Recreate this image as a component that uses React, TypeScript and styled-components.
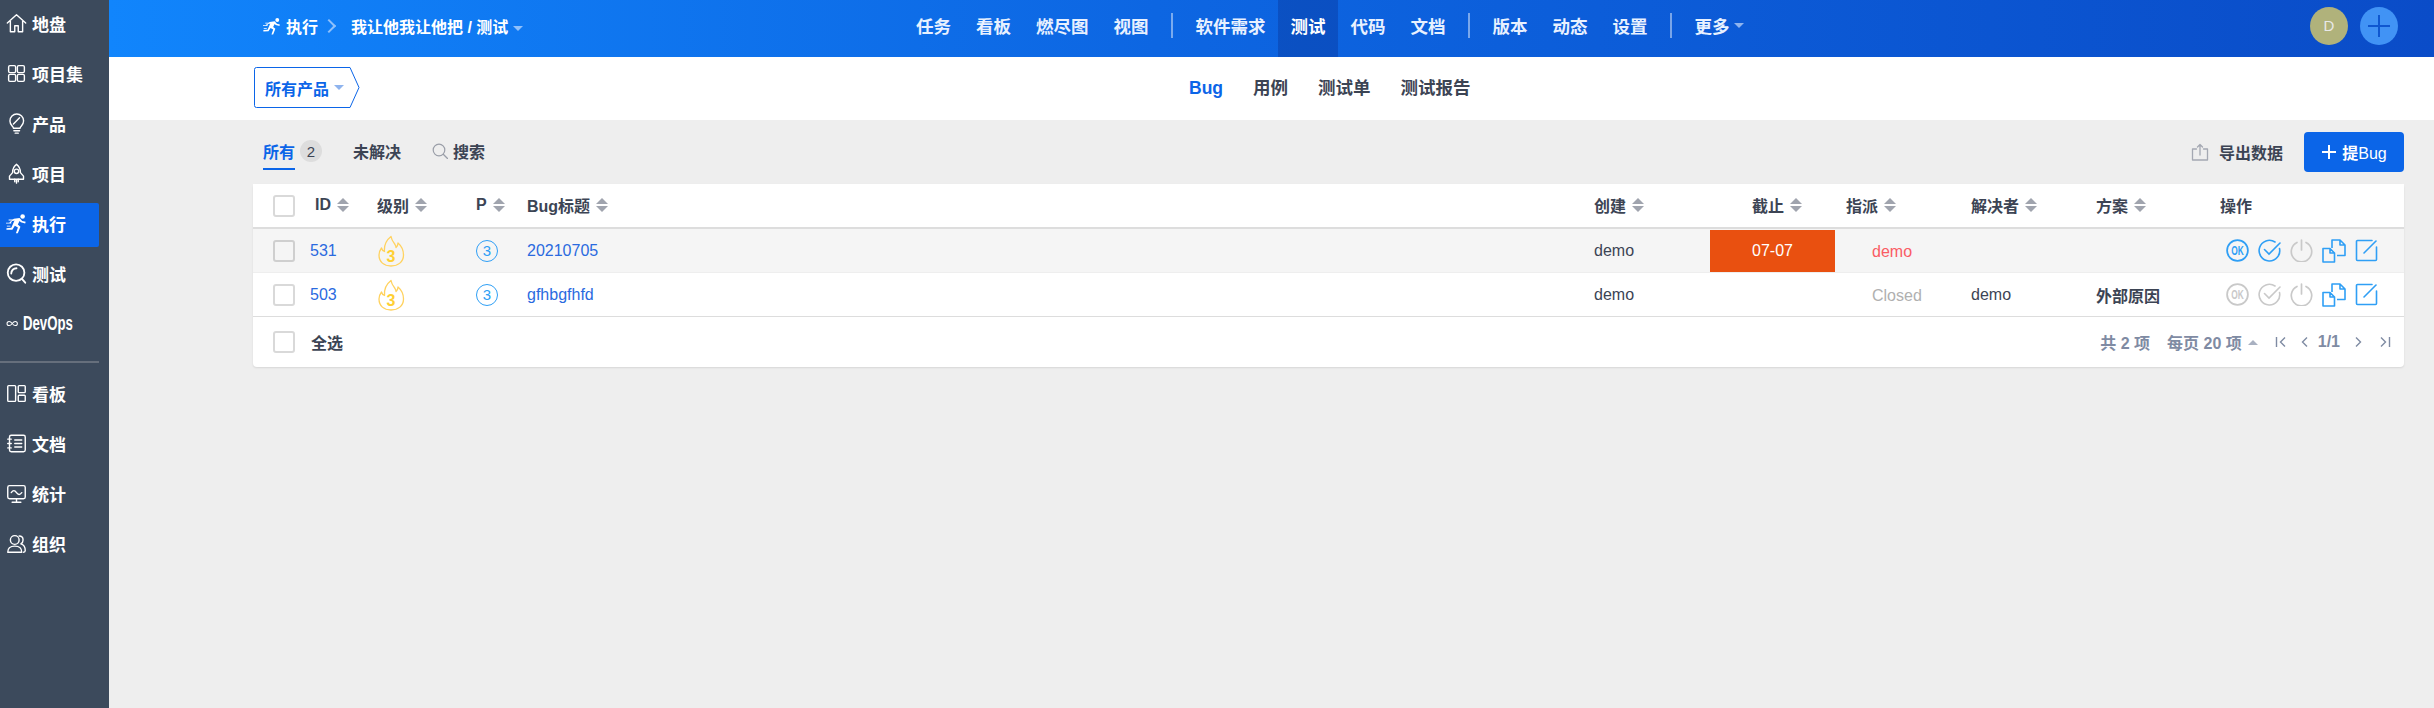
import React from "react";
import styled, { createGlobalStyle } from "styled-components";

const FONT = `"Liberation Sans", "Noto Sans CJK SC", sans-serif`;
const BLUE = "#0b65e8";
const LINK = "#2a6adf";
const TEXT = "#3c4454";
const ICON_BLUE = "#2f9ff5";
const ICON_GRAY = "#c9c9c9";

const GlobalStyle = createGlobalStyle`
  html, body {
    margin: 0;
    padding: 0;
    height: 100%;
    background: #eeeeee;
    font-family: ${FONT};
  }
  #root {
    height: 100%;
  }
`;

type IconProps = { color?: string };

const Svg = ({ size = 21, color = "#fff", sw = 1.6, children }: { size?: number; color?: string; sw?: number; children: React.ReactNode }) => (
  <svg width={size} height={size} viewBox="0 0 24 24" fill="none" stroke={color} strokeWidth={sw} strokeLinecap="round" strokeLinejoin="round">
    {children}
  </svg>
);

const HomeIcon = () => (
  <Svg>
    <path d="M1.500 11.500 12 2l10.500 9.500M5 9v12.500h5v-7h4v7h5V9" />
  </Svg>
);
const GridIcon = () => (
  <Svg>
    <rect x="3" y="3" width="8" height="8" rx="1.500" />
    <rect x="13" y="3" width="8" height="8" rx="1.500" />
    <rect x="3" y="13" width="8" height="8" rx="1.500" />
    <rect x="13" y="13" width="8" height="8" rx="1.500" />
  </Svg>
);
const BulbIcon = () => (
  <Svg>
    <path d="M8.500 17.500c0-2.500-4-3.500-4-8.500a7.800 7.800 0 0 1 15.600 0c0 5-4 6-4 8.500z" />
    <path d="M9 20.300h6.500M10.500 23h3.500M15.500 5.500l-7 7" />
  </Svg>
);
const RocketIcon = () => (
  <Svg>
    <path d="M12 1.500c3.500 2.500 4.500 6 4.500 9.500l3.500 4v3.500h-16V15l3.500-4c0-3.500 1-7 4.500-9.500z" />
    <circle cx="12" cy="9.500" r="2.500" />
    <path d="M10 18.500v3M14 18.500v3M12 20v3" />
  </Svg>
);
const RunnerIcon = ({ size = 21 }: { size?: number }) => (
  <svg width={size} height={size} viewBox="0 0 24 24" fill="#fff">
    <circle cx="19" cy="4" r="2.600" />
    <path d="M9 6.500l6.500-.8 3 3.300 4 1-.6 1.900-4.900-1.300-1.500-1.400-2 4 3 2.500-3 7.500h-2.200l2.300-6.500-3.500-2.200-2.800 4.500-6.800.2v-1.900l5.600-.4 3.600-8.300-2.800.4-1.500 2.600-1.700-.8z" />
    <path d="M3 7.500h6v1H3zM0 11h6v1H0zM1 14.500h4v1H1z" />
  </svg>
);
const TestIcon = () => (
  <Svg sw={2.100}>
    <circle cx="11.500" cy="11" r="9.500" />
    <path d="M6 12c0-3.500 2.500-6 6-6M18.500 18.500 22 22.500" />
  </Svg>
);
const InfinityIcon = () => (
  <Svg sw={2}>
    <path d="M12 12c-2-2.670-4-4-6-4a4 4 0 1 0 0 8c2 0 4-1.330 6-4Zm0 0c2 2.670 4 4 6 4a4 4 0 0 0 0-8c-2 0-4 1.330-6 4Z" />
  </Svg>
);
const BoardIcon = () => (
  <Svg>
    <rect x="2" y="3" width="9" height="18" rx="1" />
    <rect x="14" y="3" width="8" height="8" rx="1" />
    <rect x="14" y="14" width="8" height="7" rx="1" />
  </Svg>
);
const NotebookIcon = () => (
  <Svg>
    <rect x="4" y="2.500" width="18" height="19" rx="2" />
    <path d="M2 7h4M2 12h4M2 17h4M10 8h8M10 12h8M10 16h8" />
  </Svg>
);
const MonitorIcon = () => (
  <Svg>
    <rect x="2" y="3" width="20" height="15" rx="2" />
    <path d="M6 11c2-3 4-3 6 0s4 2.500 6 0M12 18v3.500M7 22h10" />
  </Svg>
);
const UsersIcon = () => (
  <Svg>
    <circle cx="10" cy="8" r="5" />
    <path d="M2 22c0-5 3.500-7 8-7s8 2 8 7zM15 3.500c3 0 4.500 2 4.500 4.500 0 2-1 3.500-2.500 4.500 3 1 5 3.500 5 7.500 0 1-1 2-2 2" />
  </Svg>
);

const Caret = styled.span<{ $color: string; $up?: boolean }>`
  display: inline-block;
  width: 0;
  height: 0;
  border-left: 5px solid transparent;
  border-right: 5px solid transparent;
  ${(p) => (p.$up ? `border-bottom: 5px solid ${p.$color};` : `border-top: 5px solid ${p.$color};`)}
`;

const SortWrap = styled.span`
  display: inline-flex;
  flex-direction: column;
  gap: 2px;
  margin-left: 6px;
`;
const Tri = styled.span<{ $up?: boolean }>`
  width: 0;
  height: 0;
  border-left: 6px solid transparent;
  border-right: 6px solid transparent;
  ${(p) => (p.$up ? "border-bottom: 6px solid #a0a4ae;" : "border-top: 6px solid #a0a4ae;")}
`;
const SortIcon = () => (
  <SortWrap>
    <Tri $up />
    <Tri />
  </SortWrap>
);

const FlameIcon = () => (
  <svg width="28" height="32" viewBox="0 0 28 32" fill="none" stroke="#ffd25f" strokeWidth="1.300" strokeLinejoin="round">
    <path d="M14 31C7 31 2 27 2 20c0-3 1-5 2.500-7 .5 2 1.500 3 3 3.500C7 11 9.500 5 14 1.500c.5 3.500 2 5.500 4 8 .5 1 1 2 1 3 1-1 2-2.500 2-4.500 3.500 3 5.500 7.500 5.500 12C26.500 27 21 31 14 31z" />
    <text x="14" y="27" textAnchor="middle" fontSize="16" fontWeight="700" fill="#ffd033" stroke="none" fontFamily="Liberation Sans">
      3
    </text>
  </svg>
);

const OkIcon = ({ color = ICON_BLUE }: IconProps) => (
  <svg width="23" height="23" viewBox="0 0 23 23" fill="none" stroke={color} strokeWidth="1.800">
    <circle cx="11.500" cy="11.500" r="10.400" />
    <text x="11.500" y="16" textAnchor="middle" fontSize="12.500" fontWeight="700" fill={color} stroke="none" fontFamily="Liberation Sans" textLength="12.500" lengthAdjust="spacingAndGlyphs">
      OK
    </text>
  </svg>
);
const CheckIcon = ({ color = ICON_BLUE }: IconProps) => (
  <svg width="23" height="23" viewBox="0 0 23 23" fill="none" stroke={color} strokeWidth="1.600" strokeLinecap="round">
    <path d="M21.500 9.500A10.300 10.300 0 1 1 17 3" />
    <path d="M6.500 10.500l4.500 4.500L22 4" />
  </svg>
);
const PowerIcon = () => (
  <svg width="23" height="23" viewBox="0 0 23 23" fill="none" stroke={ICON_GRAY} strokeWidth="1.700" strokeLinecap="round">
    <path d="M7 3.500a10.200 10.200 0 1 0 9 0M11.500 1v10" />
  </svg>
);
const CopyIcon = () => (
  <svg width="24" height="24" viewBox="0 0 24 24" fill="none" stroke={ICON_BLUE} strokeWidth="1.600" strokeLinejoin="round">
    <path d="M1 9.500h7l4.500 4.500v9H1zM8 9.500V14h4.500" />
    <path d="M10 9V1h8l5 5v10.500h-8M18 1v5h5" />
  </svg>
);
const EditIcon = () => (
  <svg width="23" height="23" viewBox="0 0 23 23" fill="none" stroke={ICON_BLUE} strokeWidth="1.600" strokeLinecap="round">
    <path d="M17 1.500H2.500a1 1 0 0 0-1 1v18a1 1 0 0 0 1 1h18a1 1 0 0 0 1-1V8" />
    <path d="M9 14 21 2" />
  </svg>
);
const SearchIcon = () => (
  <svg width="16" height="16" viewBox="0 0 16 16" fill="none" stroke="#9a9ea8" strokeWidth="1.200" strokeLinecap="round">
    <circle cx="7" cy="7" r="5.800" />
    <path d="M11.500 11.500 15.500 15.500" />
  </svg>
);
const ExportIcon = () => (
  <svg width="18" height="18" viewBox="0 0 18 18" fill="none" stroke="#a4a8b2" strokeWidth="1.300" strokeLinecap="round" strokeLinejoin="round">
    <path d="M5.500 6H1.500v11h15V6h-4M9 12V1.500M6.500 4 9 1.500 11.500 4" />
  </svg>
);
const PageIcon = ({ d }: { d: string }) => (
  <svg width="12" height="12" viewBox="0 0 12 12" fill="none" stroke="#7f8ba3" strokeWidth="1.400">
    <path d={d} />
  </svg>
);

const Page = styled.div`
  display: flex;
  min-height: 100vh;
  background: #eeeeee;
`;

const Sidebar = styled.aside`
  display: flex;
  flex-direction: column;
  align-items: flex-start;
  width: 109px;
  flex-shrink: 0;
  background: #3c4a5c;
`;

const SideItem = styled.div<{ $active?: boolean }>`
  display: flex;
  align-items: center;
  gap: 5px;
  box-sizing: border-box;
  height: 44px;
  width: 99px;
  padding: 0 0 3px 6px;
  margin: 3px 0;
  border-radius: 0 2px 2px 0;
  color: #fff;
  font-size: 17px;
  font-weight: 700;
  background: ${(p) => (p.$active ? BLUE : "transparent")};
`;

const SideDivider = styled.div`
  width: 99px;
  height: 2px;
  background: #666f7c;
  margin: 11px 0 7px;
`;

const Narrow = styled.span`
  display: inline-block;
  font-size: 20px;
  transform: scaleX(0.66);
  transform-origin: left center;
`;

const Main = styled.div`
  flex: 1;
  min-width: 0;
`;

const Header = styled.header`
  display: flex;
  align-items: center;
  height: 57px;
  padding-left: 154px;
  padding-right: 36px;
  background: linear-gradient(90deg, #1185fc 0%, #0d66e2 45%, #0a4cc8 100%);
  color: #fff;
`;

const Breadcrumb = styled.div`
  display: flex;
  align-items: center;
  width: 640.5px;
  flex-shrink: 0;
  padding-bottom: 5px;
  box-sizing: border-box;
  font-size: 16px;
  font-weight: 700;
`;

const CrumbApp = styled.span`
  display: flex;
  align-items: center;
  gap: 5px;
`;

const CrumbArrow = styled.span`
  width: 8px;
  height: 8px;
  margin: 0 17px 0 6px;
  border-top: 2px solid #8fc0fb;
  border-right: 2px solid #8fc0fb;
  transform: rotate(45deg);
`;

const CrumbCaret = styled.span`
  margin-left: 5px;
  display: inline-flex;
  vertical-align: middle;
`;

const TopNav = styled.nav`
  display: flex;
  align-items: stretch;
  height: 57px;
  flex: 1;
`;

const NavItem = styled.div<{ $active?: boolean }>`
  display: flex;
  align-items: center;
  gap: 4px;
  padding: 0 12.5px 7px;
  font-size: 17.5px;
  font-weight: 700;
  color: ${(p) => (p.$active ? "#fff" : "#e8f1ff")};
  background: ${(p) => (p.$active ? "rgba(8, 58, 160, 0.45)" : "transparent")};
`;

const NavDivider = styled.span`
  width: 2px;
  height: 25px;
  margin: 13px 10px 0;
  background: rgba(255, 255, 255, 0.45);
`;

const Avatar = styled.div`
  display: flex;
  align-items: center;
  justify-content: center;
  width: 38px;
  height: 38px;
  margin-bottom: 6px;
  border-radius: 50%;
  background: #b0b27b;
  color: #e8e8e8;
  font-size: 15px;
`;

const AddCircle = styled.div`
  display: flex;
  align-items: center;
  justify-content: center;
  width: 38px;
  height: 38px;
  margin: 0 0 6px 12px;
  border-radius: 50%;
  background: #4193f5;
`;

const SubBar = styled.div`
  display: flex;
  align-items: center;
  height: 63px;
  background: #fff;
  padding-left: 145px;
`;

const ProductSwitch = styled.div`
  position: relative;
  display: flex;
  align-items: center;
  gap: 5px;
  width: 105px;
  height: 41px;
  margin-bottom: 2px;
  padding-left: 11px;
  box-sizing: border-box;
  color: ${BLUE};
  font-size: 16px;
  font-weight: 700;

  svg {
    position: absolute;
    left: 0;
    top: 0;
  }
`;

const SubNav = styled.div`
  display: flex;
  align-items: center;
  gap: 30px;
  margin: 0 0 2px 830px;
`;

const SubItem = styled.span<{ $active?: boolean }>`
  font-size: 17.5px;
  line-height: 24px;
  font-weight: 700;
  color: ${(p) => (p.$active ? BLUE : TEXT)};
`;

const Content = styled.div`
  padding: 12px 30px 0 144px;
`;

const Toolbar = styled.div`
  display: flex;
  align-items: center;
  height: 40px;
  margin-bottom: 12px;
`;

const ToolTab = styled.span<{ $active?: boolean; $first?: boolean }>`
  position: relative;
  display: flex;
  align-items: center;
  gap: 5px;
  padding-bottom: 2px;
  font-size: 16px;
  font-weight: 700;
  color: ${(p) => (p.$active ? BLUE : TEXT)};
  margin-left: ${(p) => (p.$first ? "10px" : "0")};
  margin-right: 31px;
`;

const Underline = styled.span`
  position: absolute;
  left: 0;
  bottom: -5px;
  width: 32px;
  height: 2px;
  background: ${BLUE};
`;

const CountBadge = styled.span`
  display: flex;
  align-items: center;
  justify-content: center;
  width: 22px;
  height: 22px;
  border-radius: 50%;
  background: #dddddd;
  color: ${TEXT};
  font-size: 15px;
  font-weight: 400;
`;

const ToolRight = styled.div`
  display: flex;
  align-items: center;
  margin-left: auto;
`;

const ExportLink = styled.span`
  display: flex;
  align-items: center;
  gap: 10px;
  font-size: 16px;
  font-weight: 700;
  color: ${TEXT};
  margin-right: 21px;
`;

const AddButton = styled.div`
  display: flex;
  align-items: center;
  gap: 5px;
  justify-content: center;
  width: 100px;
  height: 40px;
  border-radius: 4px;
  background: ${BLUE};
  color: #fff;
  font-size: 16px;
`;

const Strong = styled.b`
  font-weight: 700;
`;

const Card = styled.div`
  background: #fff;
  border-radius: 4px;
  box-shadow: 0 1px 2px rgba(0, 0, 0, 0.1);
  font-size: 16px;
  color: ${TEXT};
`;

const Row = styled.div<{ $shade?: boolean; $head?: boolean }>`
  display: grid;
  grid-template-columns: 57px 67px 99px 51px 1067px 116px 125px 136px 125px 124px 184px;
  align-items: center;
  height: 43px;
  background: ${(p) => (p.$shade ? "#f5f5f5" : "#fff")};
  border-bottom: ${(p) => (p.$head ? "2px solid #dddddd" : p.$shade ? "1px solid #eeeeee" : "1px solid #dddddd")};
`;

const Check = styled.span<{ $shade?: boolean }>`
  display: block;
  width: 18px;
  height: 18px;
  margin-left: 20px;
  border: 2px solid ${(p) => (p.$shade ? "#cfcfcf" : "#d9d9d9")};
  border-radius: 3px;
  background: ${(p) => (p.$shade ? "#f5f5f5" : "#fff")};
`;

const HeadCell = styled.div<{ $indent?: number }>`
  display: flex;
  align-items: center;
  padding-bottom: 2px;
  font-weight: 700;
  padding-left: ${(p) => p.$indent ?? 0}px;
`;

const Link = styled.span`
  color: ${LINK};
`;

const Priority = styled.span`
  display: flex;
  align-items: center;
  justify-content: center;
  width: 20px;
  height: 20px;
  border: 1px solid ${ICON_BLUE};
  border-radius: 50%;
  color: ${ICON_BLUE};
  font-size: 15px;
`;

const Cell = styled.div`
  display: flex;
  align-items: center;
`;

const Overdue = styled.div`
  display: flex;
  align-items: center;
  justify-content: center;
  height: 42px;
  background: #e95010;
  color: #fff;
`;

const Assignee = styled.div<{ $color: string }>`
  padding: 2px 0 0 37px;
  color: ${(p) => p.$color};
`;

const Actions = styled.div`
  display: flex;
  align-items: center;
  gap: 9px;
  padding-left: 6px;
`;

const Footer = styled.div`
  display: flex;
  align-items: center;
  height: 50px;
`;

const SelectAll = styled.span`
  font-weight: 700;
  margin-left: 16px;
`;

const Pager = styled.div`
  display: flex;
  align-items: center;
  margin-left: auto;
  padding-right: 13px;
  color: #7f8ba3;
  font-size: 16px;
  font-weight: 700;
`;

const PagerText = styled.span<{ $gap: number }>`
  margin-right: ${(p) => p.$gap}px;
`;

const PagerIconSlot = styled.span<{ $gap: number }>`
  display: inline-flex;
  margin-right: ${(p) => p.$gap}px;
`;

const sideTop = [
  { label: "地盘", icon: <HomeIcon /> },
  { label: "项目集", icon: <GridIcon /> },
  { label: "产品", icon: <BulbIcon /> },
  { label: "项目", icon: <RocketIcon /> },
  { label: "执行", icon: <RunnerIcon />, active: true },
  { label: "测试", icon: <TestIcon /> },
];
const sideBottom = [
  { label: "看板", icon: <BoardIcon /> },
  { label: "文档", icon: <NotebookIcon /> },
  { label: "统计", icon: <MonitorIcon /> },
  { label: "组织", icon: <UsersIcon /> },
];

const navGroups = [
  ["任务", "看板", "燃尽图", "视图"],
  ["软件需求", "测试", "代码", "文档"],
  ["版本", "动态", "设置"],
];

function App() {
  return (
    <Page>
      <GlobalStyle />
      <Sidebar>
        {sideTop.map((s) => (
          <SideItem key={s.label} $active={s.active}>
            {s.icon}
            {s.label}
          </SideItem>
        ))}
        <SideItem>
          <InfinityIcon />
          <Narrow>DevOps</Narrow>
        </SideItem>
        <SideDivider />
        {sideBottom.map((s) => (
          <SideItem key={s.label}>
            {s.icon}
            {s.label}
          </SideItem>
        ))}
      </Sidebar>
      <Main>
        <Header>
          <Breadcrumb>
            <CrumbApp>
              <RunnerIcon size={18} />
              执行
            </CrumbApp>
            <CrumbArrow />
            <span>
              我让他我让他把 / 测试
              <CrumbCaret>
                <Caret $color="#8fc0fb" />
              </CrumbCaret>
            </span>
          </Breadcrumb>
          <TopNav>
            {navGroups.map((group, i) => (
              <React.Fragment key={i}>
                {group.map((n) => (
                  <NavItem key={n} $active={n === "测试"}>
                    {n}
                  </NavItem>
                ))}
                <NavDivider />
              </React.Fragment>
            ))}
            <NavItem>
              更多
              <Caret $color="#8fb4ee" />
            </NavItem>
          </TopNav>
          <Avatar>D</Avatar>
          <AddCircle>
            <svg width="24" height="24" viewBox="0 0 24 24" stroke="#0f57d0" strokeWidth="2">
              <path d="M12 1v22M1 12h22" />
            </svg>
          </AddCircle>
        </Header>
        <SubBar>
          <ProductSwitch>
            <svg width="106" height="41" viewBox="0 0 106 41" fill="none" stroke={BLUE} strokeWidth="1">
              <path d="M2.500.500H96l9 20-9 20H2.500a2 2 0 0 1-2-2V2.500a2 2 0 0 1 2-2z" />
            </svg>
            所有产品
            <Caret $color="#8fb4ee" />
          </ProductSwitch>
          <SubNav>
            <SubItem $active>Bug</SubItem>
            <SubItem>用例</SubItem>
            <SubItem>测试单</SubItem>
            <SubItem>测试报告</SubItem>
          </SubNav>
        </SubBar>
        <Content>
          <Toolbar>
            <ToolTab $active $first>
              所有
              <CountBadge>2</CountBadge>
              <Underline />
            </ToolTab>
            <ToolTab>未解决</ToolTab>
            <ToolTab>
              <SearchIcon />
              搜索
            </ToolTab>
            <ToolRight>
              <ExportLink>
                <ExportIcon />
                导出数据
              </ExportLink>
              <AddButton>
                <svg width="16" height="16" viewBox="0 0 16 16" stroke="#fff" strokeWidth="2">
                  <path d="M8 1v14M1 8h14" />
                </svg>
                <span>
                  <Strong>提</Strong>Bug
                </span>
              </AddButton>
            </ToolRight>
          </Toolbar>
          <Card>
            <Row $head>
              <Check />
              <HeadCell $indent={5}>
                ID
                <SortIcon />
              </HeadCell>
              <HeadCell>
                级别
                <SortIcon />
              </HeadCell>
              <HeadCell>
                P
                <SortIcon />
              </HeadCell>
              <HeadCell>
                Bug标题
                <SortIcon />
              </HeadCell>
              <HeadCell>
                创建
                <SortIcon />
              </HeadCell>
              <HeadCell $indent={42}>
                截止
                <SortIcon />
              </HeadCell>
              <HeadCell $indent={11}>
                指派
                <SortIcon />
              </HeadCell>
              <HeadCell>
                解决者
                <SortIcon />
              </HeadCell>
              <HeadCell>
                方案
                <SortIcon />
              </HeadCell>
              <HeadCell>操作</HeadCell>
            </Row>
            <Row $shade>
              <Check $shade />
              <Link>531</Link>
              <Cell>
                <FlameIcon />
              </Cell>
              <Priority>3</Priority>
              <Link>20210705</Link>
              <span>demo</span>
              <Overdue>07-07</Overdue>
              <Assignee $color="#fa5c64">demo</Assignee>
              <span />
              <span />
              <Actions>
                <OkIcon />
                <CheckIcon />
                <PowerIcon />
                <CopyIcon />
                <EditIcon />
              </Actions>
            </Row>
            <Row>
              <Check />
              <Link>503</Link>
              <Cell>
                <FlameIcon />
              </Cell>
              <Priority>3</Priority>
              <Link>gfhbgfhfd</Link>
              <span>demo</span>
              <span />
              <Assignee $color="#b0b0b0">Closed</Assignee>
              <span>demo</span>
              <Strong>外部原因</Strong>
              <Actions>
                <OkIcon color={ICON_GRAY} />
                <CheckIcon color={ICON_GRAY} />
                <PowerIcon />
                <CopyIcon />
                <EditIcon />
              </Actions>
            </Row>
            <Footer>
              <Check />
              <SelectAll>全选</SelectAll>
              <Pager>
                <PagerText $gap={17}>共 2 项</PagerText>
                <PagerText $gap={6}>每页 20 项</PagerText>
                <PagerIconSlot $gap={17}>
                  <Caret $color="#a9b1c1" $up />
                </PagerIconSlot>
                <PagerIconSlot $gap={12}>
                  <PageIcon d="M1.500 1v10M10 1.500 5.500 6l4.500 4.500" />
                </PagerIconSlot>
                <PagerIconSlot $gap={7}>
                  <PageIcon d="M8 1.500 3.500 6 8 10.500" />
                </PagerIconSlot>
                <PagerText $gap={12}>1/1</PagerText>
                <PagerIconSlot $gap={15}>
                  <PageIcon d="M4 1.500 8.500 6 4 10.500" />
                </PagerIconSlot>
                <PageIcon d="M10.500 1v10M2 1.500 6.500 6 2 10.500" />
              </Pager>
            </Footer>
          </Card>
        </Content>
      </Main>
    </Page>
  );
}

export default App;
